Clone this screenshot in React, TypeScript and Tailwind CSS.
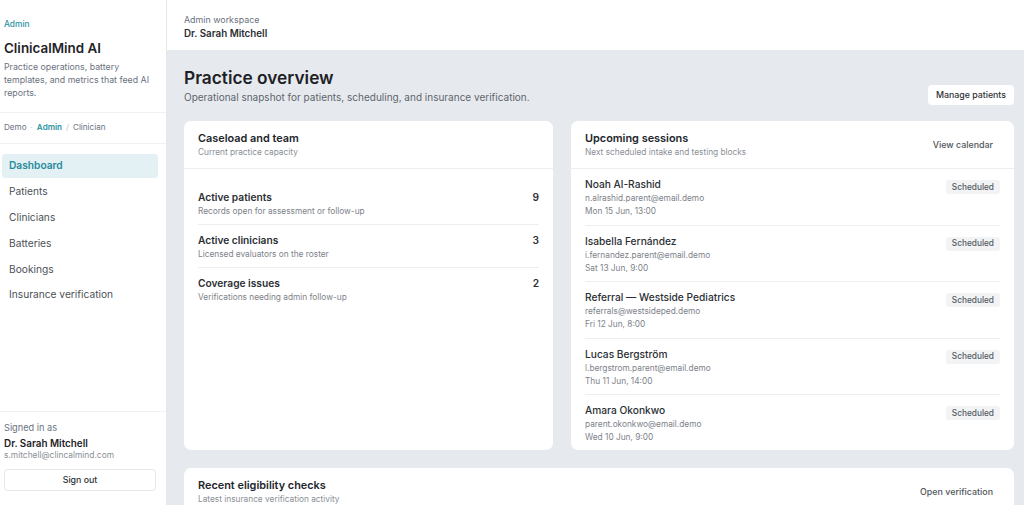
import React from 'react'

const nav = ['Dashboard', 'Patients', 'Clinicians', 'Batteries', 'Bookings', 'Insurance verification']

const stats = [
  { label: 'Active patients', sub: 'Records open for assessment or follow-up', value: 9 },
  { label: 'Active clinicians', sub: 'Licensed evaluators on the roster', value: 3 },
  { label: 'Coverage issues', sub: 'Verifications needing admin follow-up', value: 2 },
]

const sessions = [
  { name: 'Noah Al-Rashid', email: 'n.alrashid.parent@email.demo', when: 'Mon 15 Jun, 13:00' },
  { name: 'Isabella Fernández', email: 'i.fernandez.parent@email.demo', when: 'Sat 13 Jun, 9:00' },
  { name: 'Referral — Westside Pediatrics', email: 'referrals@westsideped.demo', when: 'Fri 12 Jun, 8:00' },
  { name: 'Lucas Bergström', email: 'l.bergstrom.parent@email.demo', when: 'Thu 11 Jun, 14:00' },
  { name: 'Amara Okonkwo', email: 'parent.okonkwo@email.demo', when: 'Wed 10 Jun, 9:00' },
]

function Sidebar() {
  return (
    <aside className="w-[167px] shrink-0 h-[505px] bg-white border-r border-[#e5e7eb] flex flex-col">
      <div className="px-1 pt-[18px] pb-[13px] border-b border-[#eef0f2]">
        <p className="text-[8.4px] font-medium text-[#2a93a3] leading-[12px]">Admin</p>
        <h1 className="mt-[9px] text-[13.4px] font-semibold text-[#1f2328] leading-[18px]">ClinicalMind AI</h1>
        <p className="mt-[3px] max-w-[150px] text-[8.8px] leading-[13px] text-[#6b7280]">
          Practice operations, battery templates, and metrics that feed AI reports.
        </p>
      </div>
      <div className="px-1 pt-[8px] pb-[10px] border-b border-[#eef0f2] flex items-center gap-[4px] text-[8.1px] leading-[12px] text-[#6b7280]">
        <span>Demo</span>
        <span className="text-[#c0c4ca]">·</span>
        <span className="font-semibold text-[#2a93a3]">Admin</span>
        <span className="text-[#c0c4ca]">/</span>
        <span>Clinician</span>
      </div>
      <nav className="pt-[10px] pl-[2px] pr-[8px] flex flex-col gap-[1.8px]">
        {nav.map((item, i) => (
          <div
            key={item}
            className={
              i === 0
                ? 'h-[24px] rounded-[4px] bg-[#e3f0f4] px-[7px] flex items-center text-[10.2px] font-semibold text-[#2a8b9b]'
                : 'h-[24px] px-[7px] flex items-center text-[10.2px] text-[#4b5057]'
            }
          >
            {item}
          </div>
        ))}
      </nav>
      <div className="mt-auto border-t border-[#eef0f2] px-1 pt-[10px] pb-[14px]">
        <p className="text-[9.2px] text-[#6b7280] leading-[12px]">Signed in as</p>
        <p className="mt-[3px] text-[9.9px] font-semibold text-[#1f2328] leading-[12px]">Dr. Sarah Mitchell</p>
        <p className="text-[8.4px] text-[#8a8f96] leading-[12px]">s.mitchell@clincalmind.com</p>
        <button className="mt-[8px] w-[152px] h-[22px] rounded-[4px] border border-[#e5e7eb] bg-white text-[8.8px] font-medium text-[#2d3136]">
          Sign out
        </button>
      </div>
    </aside>
  )
}

function CardHeader({ title, sub, action }: { title: string; sub: string; action?: string }) {
  return (
    <div className="h-[48px] px-[14px] border-b border-[#eceef0] flex items-center justify-between">
      <div>
        <h3 className="text-[10.9px] font-semibold text-[#22262b] leading-[14px]">{title}</h3>
        <p className="text-[8.3px] text-[#8a8f96] leading-[14px]">{sub}</p>
      </div>
      {action && <span className="mr-[7px] text-[8.9px] font-medium text-[#50555c]">{action}</span>}
    </div>
  )
}

export default function App() {
  return (
    <div className="w-[1024px] h-[505px] overflow-hidden flex font-['Inter',sans-serif] bg-[#e6eaee]">
      <Sidebar />
      <main className="flex-1 flex flex-col min-w-0">
        <header className="h-[50px] shrink-0 bg-white pl-[17px] pt-[14px]">
          <p className="text-[8.9px] text-[#6b7280] leading-[12px]">Admin workspace</p>
          <p className="mt-[2px] text-[9.8px] font-semibold text-[#2b2f34] leading-[12px]">Dr. Sarah Mitchell</p>
        </header>
        <div className="flex-1 pl-[17px] pr-[10px] pt-[17px]">
          <div className="flex items-end justify-between">
            <div>
              <h2 className="text-[17.3px] font-semibold text-[#1d2125] leading-[22px]">Practice overview</h2>
              <p className="mt-[1px] text-[10px] text-[#5f656c] leading-[14px]">
                Operational snapshot for patients, scheduling, and insurance verification.
              </p>
            </div>
            <button className="mb-[-1px] h-[20px] px-[8px] rounded-[4px] bg-white text-[8.8px] font-medium text-[#2d3136]">
              Manage patients
            </button>
          </div>

          <div className="mt-[17px] grid grid-cols-[369px_1fr] gap-[18px]">
            <section className="h-[329px] rounded-[7px] bg-white">
              <CardHeader title="Caseload and team" sub="Current practice capacity" />
              <div className="px-[14px] pt-[13px]">
                {stats.map((s, i) => (
                  <div
                    key={s.label}
                    className={
                      'h-[43px] flex items-start justify-between pt-[9px] ' +
                      (i < stats.length - 1 ? 'border-b border-[#eceef0]' : '')
                    }
                  >
                    <div>
                      <p className="text-[10.2px] font-semibold text-[#2b2f34] leading-[13px]">{s.label}</p>
                      <p className="mt-[1px] text-[8.3px] text-[#7d828a] leading-[12px]">{s.sub}</p>
                    </div>
                    <span className="text-[10.2px] font-semibold text-[#2b2f34] leading-[13px]">{s.value}</span>
                  </div>
                ))}
              </div>
            </section>

            <section className="h-[329px] rounded-[7px] bg-white">
              <CardHeader title="Upcoming sessions" sub="Next scheduled intake and testing blocks" action="View calendar" />
              <div className="px-[14px]">
                {sessions.map((s, i) => (
                  <div
                    key={s.name}
                    className={
                      'h-[56.5px] flex items-start justify-between pt-[9px] ' +
                      (i < sessions.length - 1 ? 'border-b border-[#eceef0]' : '')
                    }
                  >
                    <div>
                      <p className="text-[10.2px] font-medium text-[#2b2f34] leading-[13px]">{s.name}</p>
                      <p className="mt-[1px] text-[8.3px] text-[#7d828a] leading-[13px]">{s.email}</p>
                      <p className="text-[8.3px] text-[#7d828a] leading-[13px]">{s.when}</p>
                    </div>
                    <span className="mt-[2px] h-[14px] px-[6px] rounded-[3px] bg-[#f1f3f5] flex items-center text-[8.3px] font-medium text-[#565b62]">
                      Scheduled
                    </span>
                  </div>
                ))}
              </div>
            </section>
          </div>

          <section className="mt-[18px] h-[80px] rounded-[7px] bg-white">
            <CardHeader
              title="Recent eligibility checks"
              sub="Latest insurance verification activity"
              action="Open verification"
            />
          </section>
        </div>
      </main>
    </div>
  )
}
